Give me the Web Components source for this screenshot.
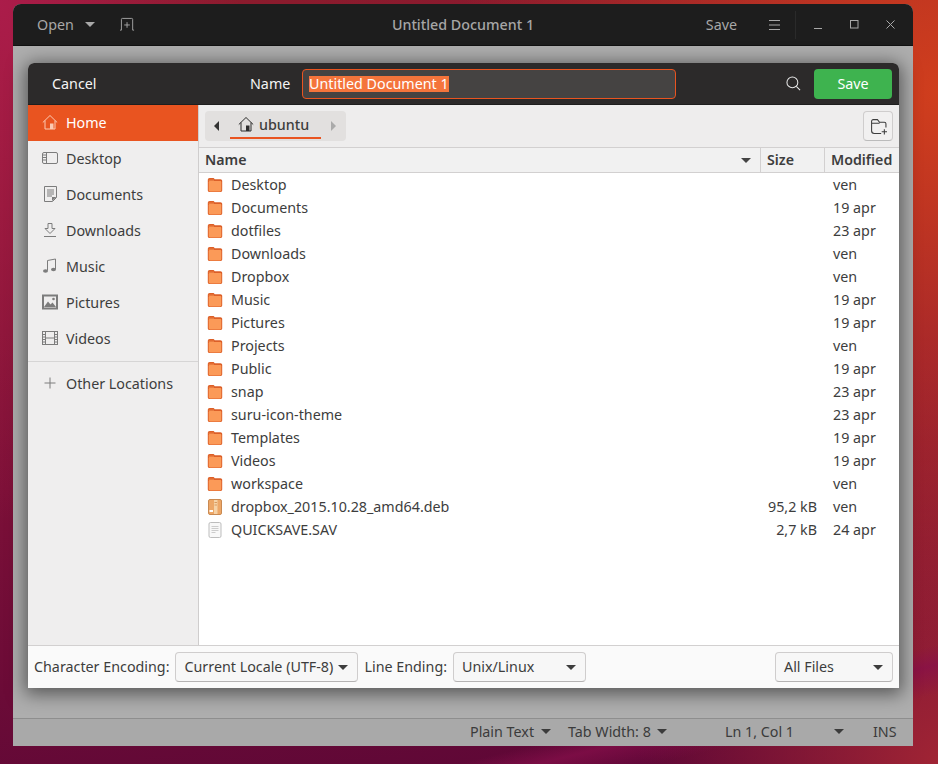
<!DOCTYPE html>
<html>
<head>
<meta charset="utf-8">
<title>Save dialog</title>
<style>
  html, body { margin: 0; height: 100%; overflow: hidden; }
  body {
    font-family: "Noto Sans", sans-serif;
    font-size: 14.3px;
    background:
      linear-gradient(166deg, transparent 88%, rgba(135,15,75,.7) 90%, transparent 93%),
      radial-gradient(480px 560px at 100% 12%, #d03e1d 0%, rgba(208,62,29,0) 100%),
      radial-gradient(300px 420px at 100% 100%, #a02434 0%, rgba(160,36,52,0) 100%),
      radial-gradient(240px 520px at 0% 0%, #ab1c4a 0%, rgba(171,28,74,0) 100%),
      linear-gradient(172deg, #8c1c2c 0%, #7c1038 55%, #5a0636 100%);
  }
</style>
</head>
<body>
<desktop-scene></desktop-scene>

<script>
const ICONS = {
  home: '<path d="M.8 8.500 8 1.500l7.200 7M3 6.500V15h10V6.500" fill="none" stroke="currentColor"/><rect x="8" y="9.500" width="3.500" height="5.500" fill="currentColor"/>',
  desktop: '<rect x=".5" y="2.500" width="15" height="11" rx="1.500" fill="none" stroke="currentColor"/><path d="M4.500 3v10M1 5h3M1 7.500h3M1 10h3" stroke="currentColor" fill="none"/>',
  documents: '<path d="M2.500.5h12v11l-4 4h-8zM5 4h7M5 6h7M5 8h7M5 10h5" fill="none" stroke="currentColor"/><path d="M10 15v-4h4.500z" fill="currentColor"/>',
  downloads: '<path d="M6 1.500h4v5h3L8 11.500 3 6.500h3zM2 14.500h12" fill="none" stroke="currentColor"/>',
  music: '<path d="M5.500 12.500V2.500l8-1.500v10" fill="none" stroke="currentColor"/><ellipse cx="3.500" cy="13" rx="2.500" ry="1.800" fill="currentColor"/><ellipse cx="11.500" cy="11.500" rx="2.500" ry="1.800" fill="currentColor"/>',
  pictures: '<rect x="1" y="1.500" width="14" height="13" fill="none" stroke="currentColor" stroke-width="2"/><path d="M2 13l4-5.500 2.500 3 2-2L14 13z" fill="currentColor"/><circle cx="11.500" cy="5" r="1.300" fill="currentColor"/>',
  videos: '<rect x=".5" y="1.500" width="15" height="13" fill="none" stroke="currentColor"/><path d="M3.500 2v12M12.500 2v12M3.500 8h9M1 4.500h2M1 7h2M1 9.500h2M1 12h2M13 4.500h2M13 7h2M13 9.500h2M13 12h2" stroke="currentColor" fill="none"/>',
  plus: '<path d="M8 2.500v11M2.500 8h11" stroke="currentColor" fill="none"/>',
  search: '<circle cx="6.800" cy="6.800" r="5.800" fill="none" stroke="currentColor" stroke-width="1.100"/><path d="M11 11l4 4" stroke="currentColor" stroke-width="1.100"/>',
  newtab: '<path d="M1.500 14V2.500a1 1 0 0 1 1-1h10a1 1 0 0 1 1 1V14M7.500 5.500v6M4.500 8.500h6" fill="none" stroke="currentColor"/><path d="M0 14h1.500M13.500 14H15" stroke="currentColor"/>',
  newfolder: '<path d="M1.500 12.500V3a1.500 1.500 0 0 1 1.500-1.500h4l2 2.500h4.500A1.500 1.500 0 0 1 15 5.500V9M1.500 12a2.500 2.500 0 0 0 2.500 2.500h6.500M1.500 5h7.500" fill="none" stroke="currentColor"/><path d="M13.500 10.500v5M11 13h5" stroke="currentColor"/>',
  menu: '<path d="M0 1.500h11M0 6h11M0 10.500h11" stroke="currentColor" fill="none"/>',
  min: '<path d="M0 8.500h8" stroke="currentColor" stroke-width="1"/>',
  max: '<rect x=".5" y=".5" width="7.500" height="7.500" fill="none" stroke="currentColor" stroke-width="1"/>',
  close: '<path d="M.5.5l8 8M8.500.5l-8 8" stroke="currentColor" fill="none"/>',
  folder: '<path d="M.8 3.200C.8 1.900 1.500 1 2.800 1H6c.8 0 1.200.6 1.700 1.200h5.700c1.100 0 1.800.7 1.800 1.800v9.300c0 1.100-.7 1.800-1.800 1.800H2.600c-1.100 0-1.800-.7-1.800-1.800z" fill="#dc5f28"/><path d="M1.700 5.300c0-.8.500-1.300 1.300-1.300h10c.8 0 1.300.5 1.300 1.300v7.800c0 .8-.5 1.300-1.300 1.300H3c-.8 0-1.300-.5-1.300-1.300z" fill="#fb9a58"/><path d="M1.700 3.200h5.300" stroke="#f08a4c" fill="none"/>',
  deb: '<rect x="1.500" y=".5" width="13" height="15" rx="1.500" fill="#eda767" stroke="#c98a52"/><rect x="7" y="1" width="3.500" height="14" fill="#f6d2a6"/><path d="M7.500 3.500h2.500M7.500 6h2.500" stroke="#d79a5f"/><rect x="2.500" y="11" width="3.500" height="2" fill="#fff"/>',
  text: '<rect x="2" y=".5" width="12" height="15" rx="1.500" fill="#f8f8f8" stroke="#bdbdbd"/><path d="M4.500 4.500h7M4.500 6.500h7M4.500 8.500h7M4.500 10.500h4" stroke="#cccccc" fill="none"/>',
};

// small inline svg used by the other elements
function icon(name, size = 16, vb = 16) {
  return `<svg width="${size}" height="${size}" viewBox="0 0 ${vb} ${vb}" aria-hidden="true">${ICONS[name]}</svg>`;
}

class BaseEl extends HTMLElement {
  constructor() {
    super();
    this.attachShadow({ mode: 'open' });
  }
  connectedCallback() {
    this.shadowRoot.innerHTML = this.render();
  }
}

class DownArrow extends BaseEl {
  render() {
    return `<style>
      :host { display: inline-block; width: 0; height: 0;
        border-left: 5px solid transparent; border-right: 5px solid transparent;
        border-top: 5px solid currentColor; flex: none; }
    </style>`;
  }
}

class EditorWindow extends BaseEl {
  render() {
    return `<style>
      :host { position: absolute; left: 13px; top: 4px; width: 900px; height: 742px;
        display: flex; flex-direction: column; background: #aeaeae; border-radius: 8px 8px 0 0; overflow: hidden; }
      .head { height: 42px; box-sizing: border-box; flex: none; display: grid; grid-template-columns: 1fr auto 1fr; align-items: center;
        background: #1d1d1d; color: #a8a8a8; border-bottom: 1px solid #111; }
      .left { display: flex; align-items: center; }
      .open { margin-left: 24px; display: flex; align-items: center; gap: 11px; width: 58px; }
      .tab { margin-left: 25px; display: flex; color: #a5a5a5; }
      .title { font-weight: 500; color: #a6a6a6; }
      .right { display: flex; align-items: center; justify-content: flex-end; }
      .save { margin-right: 32px; }
      .menu { display: flex; margin-right: 15px; }
      .sep { width: 1px; height: 28px; background: #2a2a2a; margin-right: 18px; }
      .wb { display: flex; width: 9px; margin-right: 27px; }
      .wb:last-child { margin-right: 18px; }
      .main { flex: 1; }
      .status { height: 28px; flex: none; box-sizing: border-box; border-top: 1px solid #8e8e8e; background: #a9a9a9; padding-bottom: 2px;
        display: flex; align-items: center; color: #3b3b3b; }
      .item { display: flex; align-items: center; justify-content: space-between; flex: none; white-space: nowrap; }
    </style>
    <div class="head">
      <div class="left">
        <div class="open"><span>Open</span><down-arrow></down-arrow></div>
        <div class="tab">${icon('newtab', 15)}</div>
      </div>
      <div class="title">Untitled Document 1</div>
      <div class="right">
        <span class="save">Save</span>
        <span class="menu"><svg width="11" height="12" viewBox="0 0 11 12">${ICONS.menu}</svg></span>
        <span class="sep"></span>
        <span class="wb"><svg width="9" height="9" viewBox="0 0 9 9">${ICONS.min}</svg></span>
        <span class="wb"><svg width="9" height="9" viewBox="0 0 9 9">${ICONS.max}</svg></span>
        <span class="wb"><svg width="9" height="9" viewBox="0 0 9 9">${ICONS.close}</svg></span>
      </div>
    </div>
    <div class="main"></div>
    <div class="status">
      <div class="item" style="margin-left:457px;width:81px"><span>Plain Text</span><down-arrow></down-arrow></div>
      <div class="item" style="margin-left:17px;width:99px"><span>Tab Width: 8</span><down-arrow></down-arrow></div>
      <div class="item" style="margin-left:58px;width:119px"><span>Ln 1, Col 1</span><down-arrow></down-arrow></div>
      <div class="item" style="margin-left:29px"><span>INS</span></div>
    </div>`;
  }
}

class DialogHeader extends BaseEl {
  render() {
    return `<style>
      :host { display: flex; align-items: center; height: 42px; flex: none; background: #2c2a2a;
        color: #f4f4f4; border-bottom: 1px solid #1e1e1e; box-sizing: border-box; border-radius: 6px 6px 0 0; }
      .cancel { margin-left: 24px; width: 198px; }
      .name { width: 52px; }
      .entry { width: 374px; height: 30px; box-sizing: border-box; background: #454342; border: 1px solid #e95420;
        border-radius: 4px; padding-left: 6px; display: flex; align-items: center; }
      .entry span { background: #f4743b; color: #fff; line-height: 16px; }
      .search { margin-left: 110px; display: flex; color: #e8e8e8; }
      .save { margin-left: 13px; width: 78px; height: 30px; border-radius: 4px; background: #3eb34f;
        color: #fff; display: flex; align-items: center; justify-content: center; }
    </style>
    <span class="cancel">Cancel</span>
    <span class="name">Name</span>
    <div class="entry"><span>Untitled Document 1</span></div>
    <span class="search">${icon('search', 15)}</span>
    <div class="save">Save</div>`;
  }
}

class PlaceRow extends BaseEl {
  render() {
    const active = this.hasAttribute('active');
    return `<style>
      :host { display: flex; align-items: center; height: 36px; box-sizing: border-box; padding: 0 0 2px 14px; gap: 8px;
        color: ${active ? '#fff' : '#3d3d3d'}; background: ${active ? '#e95420' : 'transparent'}; flex: none; }
      svg { color: ${active ? '#fbc9b2' : '#7c7c7c'}; flex: none; }
    </style>
    ${icon(this.getAttribute('icon'))}<span><slot></slot></span>`;
  }
}

class PlacesSidebar extends BaseEl {
  render() {
    return `<style>
      :host { display: flex; flex-direction: column; width: 171px; box-sizing: border-box; flex: none; background: #efeeee;
        border-right: 1px solid #cfcdcd; }
      hr { border: 0; height: 1px; background: #d6d5d5; margin: 4px 0 4px; width: 100%; }
    </style>
    <place-row icon="home" active>Home</place-row>
    <place-row icon="desktop">Desktop</place-row>
    <place-row icon="documents">Documents</place-row>
    <place-row icon="downloads">Downloads</place-row>
    <place-row icon="music">Music</place-row>
    <place-row icon="pictures">Pictures</place-row>
    <place-row icon="videos">Videos</place-row>
    <hr>
    <place-row icon="plus">Other Locations</place-row>`;
  }
}

class PathBar extends BaseEl {
  render() {
    return `<style>
      :host { display: flex; align-items: center; height: 42px; flex: none; background: #eeeded;
        padding: 0 6px; box-sizing: border-box; color: #3d3d3d; }
      .crumbs { display: flex; align-items: center; width: 141px; height: 30px; background: #e2e0df; border-radius: 4px; }
      .l, .r { width: 0; height: 0; flex: none; border-top: 5px solid transparent; border-bottom: 5px solid transparent; }
      .l { margin-left: 9px; border-right: 5px solid #333; }
      .r { margin-left: 10px; border-left: 5px solid #aaa; }
      .btn { margin-left: 11px; width: 91px; align-self: flex-start; height: 28px; box-sizing: border-box; border-bottom: 2px solid #e95420;
        padding-left: 8px; display: flex; align-items: center; gap: 5px; font-weight: 500; }
      .btn svg { color: #2e2e2e; }
      .new { margin-left: auto; width: 30px; height: 30px; box-sizing: border-box; border: 1px solid #cfcdcd; border-bottom-color: #bbb;
        border-radius: 4px; background: #f1f0f0; display: flex; align-items: center; justify-content: center; }
    </style>
    <div class="crumbs"><i class="l"></i>
      <div class="btn">${icon('home', 16)}<span>ubuntu</span></div>
      <i class="r"></i></div>
    <div class="new">${icon('newfolder', 17)}</div>`;
  }
}

class FileRow extends BaseEl {
  render() {
    return `<style>
      :host { display: grid; grid-template-columns: 1fr 64px 75px; height: 23px; align-items: center; color: #3d3d3d; }
      .name { display: flex; align-items: center; gap: 8px; padding-left: 8px; }
      .size { text-align: right; padding-right: 7px; }
      .mod { padding-left: 9px; }
      svg { flex: none; }
    </style>
    <div class="name">${icon(this.getAttribute('icon') || 'folder')}<span><slot></slot></span></div>
    <div class="size">${this.getAttribute('size') || ''}</div>
    <div class="mod">${this.getAttribute('mod')}</div>`;
  }
}

class FileList extends BaseEl {
  render() {
    return `<style>
      :host { display: flex; flex-direction: column; flex: 1; min-height: 0; background: #fff; }
      .cols { display: grid; grid-template-columns: 1fr 64px 75px; height: 26px; flex: none; box-sizing: border-box; font-size: 14.2px;
        background: #f1f1f1; border-top: 1px solid #d2d0d0; border-bottom: 1px solid #d2d0d0; font-weight: 600; color: #3d3d3d; }
      .cols div { display: flex; align-items: center; padding: 0 0 2px 6px; }
      .cols div + div { border-left: 1px solid #d2d0d0; }
      .cols div:first-child { justify-content: space-between; padding-right: 9px; padding-bottom: 2px; }
      .cols div:first-child down-arrow { color: #444; margin-top: 2px; }
    </style>
    <div class="cols"><div>Name<down-arrow></down-arrow></div><div>Size</div><div>Modified</div></div>
    <file-row mod="ven">Desktop</file-row>
    <file-row mod="19 apr">Documents</file-row>
    <file-row mod="23 apr">dotfiles</file-row>
    <file-row mod="ven">Downloads</file-row>
    <file-row mod="ven">Dropbox</file-row>
    <file-row mod="19 apr">Music</file-row>
    <file-row mod="19 apr">Pictures</file-row>
    <file-row mod="ven">Projects</file-row>
    <file-row mod="19 apr">Public</file-row>
    <file-row mod="23 apr">snap</file-row>
    <file-row mod="23 apr">suru-icon-theme</file-row>
    <file-row mod="19 apr">Templates</file-row>
    <file-row mod="19 apr">Videos</file-row>
    <file-row mod="ven">workspace</file-row>
    <file-row icon="deb" size="95,2 kB" mod="ven">dropbox_2015.10.28_amd64.deb</file-row>
    <file-row icon="text" size="2,7 kB" mod="24 apr">QUICKSAVE.SAV</file-row>`;
  }
}

class ComboBox extends BaseEl {
  render() {
    return `<style>
      :host { display: flex; align-items: center; justify-content: space-between; height: 30px; box-sizing: border-box;
        border: 1px solid #cfcdcd; border-bottom-color: #b5b3b3; border-radius: 4px; background: #f7f7f7;
        padding: 0 9px 0 8px; color: #3d3d3d; flex: none; }
      span { padding-bottom: 2px; }
    </style>
    <span><slot></slot></span><down-arrow></down-arrow>`;
  }
}

class DialogFooter extends BaseEl {
  render() {
    return `<style>
      :host { display: flex; align-items: center; height: 43px; flex: none; box-sizing: border-box;
        background: #fafafa; border-top: 1px solid #d2d0d0; padding: 0 6px; color: #3d3d3d; }
      .label { padding-bottom: 2px; }
      .c1 { width: 183px; margin: 0 6px; }
      .c2 { width: 133px; margin-left: 6px; }
      .c3 { width: 118px; margin-left: auto; }
    </style>
    <span class="label">Character Encoding:</span>
    <combo-box class="c1">Current Locale (UTF-8)</combo-box>
    <span class="label">Line Ending:</span>
    <combo-box class="c2">Unix/Linux</combo-box>
    <combo-box class="c3">All Files</combo-box>`;
  }
}

class FileDialog extends BaseEl {
  render() {
    return `<style>
      :host { position: absolute; left: 28px; top: 63px; width: 871px; height: 625px; display: flex; flex-direction: column;
        border-radius: 6px 6px 0 0; background: #fff; box-shadow: 0 3px 18px 3px rgba(0,0,0,.5); }
      .mid { flex: 1; display: flex; min-height: 0; }
      .content { flex: 1; display: flex; flex-direction: column; min-width: 0; }
    </style>
    <dialog-header></dialog-header>
    <div class="mid">
      <places-sidebar></places-sidebar>
      <div class="content"><path-bar></path-bar><file-list></file-list></div>
    </div>
    <dialog-footer></dialog-footer>`;
  }
}

class DesktopScene extends BaseEl {
  render() {
    return `<style>:host { display: block; }</style>
    <editor-window></editor-window>
    <file-dialog></file-dialog>`;
  }
}

const defs = {
  'down-arrow': DownArrow, 'editor-window': EditorWindow, 'dialog-header': DialogHeader,
  'place-row': PlaceRow, 'places-sidebar': PlacesSidebar, 'path-bar': PathBar,
  'file-row': FileRow, 'file-list': FileList, 'combo-box': ComboBox,
  'dialog-footer': DialogFooter, 'file-dialog': FileDialog, 'desktop-scene': DesktopScene,
};
Object.entries(defs).forEach(([tag, cls]) => customElements.define(tag, cls));
</script>
</body>
</html>
